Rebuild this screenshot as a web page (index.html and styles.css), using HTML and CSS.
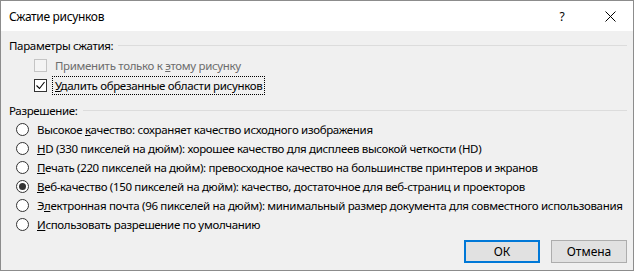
FILE: index.html
```html
<!DOCTYPE html>
<html lang="ru">
  <head>
    <meta charset="UTF-8" />
    <title>Сжатие рисунков</title>
    <link rel="stylesheet" href="styles.css">
  </head>
  <body>
    <div class="dialog">
      <div class="titlebar">
        <span class="title">Сжатие рисунков</span>
        <span class="help">?</span>
        <span class="close">
          <svg width="11" height="11" viewBox="0 0 11 11">
            <path d="M0.5 0.5 L10.5 10.5 M10.5 0.5 L0.5 10.5" stroke="#000" stroke-width="1" fill="none" />
          </svg>
        </span>
      </div>

      <div class="content">
        <div class="group-head">
          <span>Параметры сжатия:</span>
          <div class="group-line"></div>
        </div>
        <div class="check-row disabled">
          <span class="checkbox"></span>
          <span class="check-label">Применить только к <u>э</u>тому рисунку</span>
        </div>
        <div class="check-row">
          <span class="checkbox">
            <svg width="11" height="11" viewBox="0 0 11 11">
              <path d="M1.5 5.5 L4.5 8.5 L9.5 2" stroke="#000" stroke-width="1.1" fill="none" />
            </svg>
          </span>
          <span class="check-label focused"><u>У</u>далить обрезанные области рисунков</span>
        </div>

        <div class="group-head second">
          <span>Разрешение:</span>
          <div class="group-line"></div>
        </div>
        <div class="radio-row">
          <span class="radio"></span>
          <span>Высокое <u>к</u>ачество: сохраняет качество исходного изображения</span>
        </div>
        <div class="radio-row">
          <span class="radio"></span>
          <span><u>H</u>D (330 пикселей на дюйм): хорошее качество для дисплеев высокой четкости (HD)</span>
        </div>
        <div class="radio-row">
          <span class="radio"></span>
          <span><u>П</u>ечать (220 пикселей на дюйм): превосходное качество на большинстве принтеров и экранов</span>
        </div>
        <div class="radio-row">
          <span class="radio checked"></span>
          <span><u>В</u>еб-качество (150 пикселей на дюйм): качество, достаточное для веб-страниц и проекторов</span>
        </div>
        <div class="radio-row">
          <span class="radio"></span>
          <span>Э<u>л</u>ектронная почта (96 пикселей на дюйм): минимальный размер документа для совместного использования</span>
        </div>
        <div class="radio-row">
          <span class="radio"></span>
          <span><u>И</u>спользовать разрешение по умолчанию</span>
        </div>

        <div class="buttons">
          <button class="btn default">ОК</button>
          <button class="btn">Отмена</button>
        </div>
      </div>
    </div>
  </body>
</html>
```

FILE: styles.css
```css
html,
body {
  margin: 0;
  padding: 0;
}

body {
  font-family: "Noto Sans", "Open Sans", sans-serif;
  font-size: 11.5px;
  letter-spacing: -0.33px;
  color: #000;
  background: #f0f0f0;
}

.dialog {
  box-sizing: border-box;
  width: 634px;
  height: 271px;
  border: 1px solid #8c8c8c;
  background: #f0f0f0;
  display: flex;
  flex-direction: column;
}

.titlebar {
  height: 30px;
  background: #fff;
  display: flex;
  align-items: center;
  padding-left: 8px;
}

.title {
  flex: 1;
  font-size: 12px;
}

.help {
  width: 46px;
  text-align: center;
  font-size: 12px;
  padding-left: 3px;
}

.close {
  width: 46px;
  display: flex;
  justify-content: center;
  padding-left: 2px;
}

.content {
  flex: 1;
  padding: 5px 6px 0 8px;
  display: flex;
  flex-direction: column;
}

.group-head {
  height: 19px;
  display: flex;
  align-items: center;
  gap: 5px;
}

.group-head.second {
  margin-top: 6px;
}

.group-line {
  flex: 1;
  height: 1px;
  background: #dcdcdc;
  margin-top: -1px;
}

.check-row,
.radio-row {
  height: 19px;
  display: flex;
  align-items: center;
  white-space: nowrap;
}

.check-row {
  padding-left: 25px;
  margin-top: 1px;
}

.checkbox {
  box-sizing: border-box;
  flex-shrink: 0;
  width: 13px;
  height: 13px;
  border: 1px solid #333;
  background: #fff;
  display: flex;
  align-items: center;
  justify-content: center;
  margin-right: 5px;
}

.check-label {
  padding: 1px 2px;
  border: 1px dotted transparent;
}

.check-label.focused {
  border-color: #000;
}

.disabled .checkbox {
  border-color: #c4c4c4;
  background: #f4f4f4;
}

.disabled .check-label {
  color: #6d6d6d;
}

.radio-row {
  padding-left: 7px;
}

.radio {
  box-sizing: border-box;
  flex-shrink: 0;
  width: 13px;
  height: 13px;
  border: 1px solid #333;
  border-radius: 50%;
  background: #fff;
  margin-right: 8px;
  display: flex;
  align-items: center;
  justify-content: center;
}

.radio.checked::after {
  content: "";
  width: 7px;
  height: 7px;
  border-radius: 50%;
  background: #333;
}

.buttons {
  display: flex;
  justify-content: flex-end;
  gap: 11px;
  margin-top: 6px;
}

.btn {
  box-sizing: border-box;
  width: 76px;
  height: 23px;
  font-family: inherit;
  font-size: 12px;
  letter-spacing: 0;
  background: #e1e1e1;
  border: 1px solid #adadad;
  padding: 0;
  color: #000;
}

.btn.default {
  border: 2px solid #0078d7;
}
```
